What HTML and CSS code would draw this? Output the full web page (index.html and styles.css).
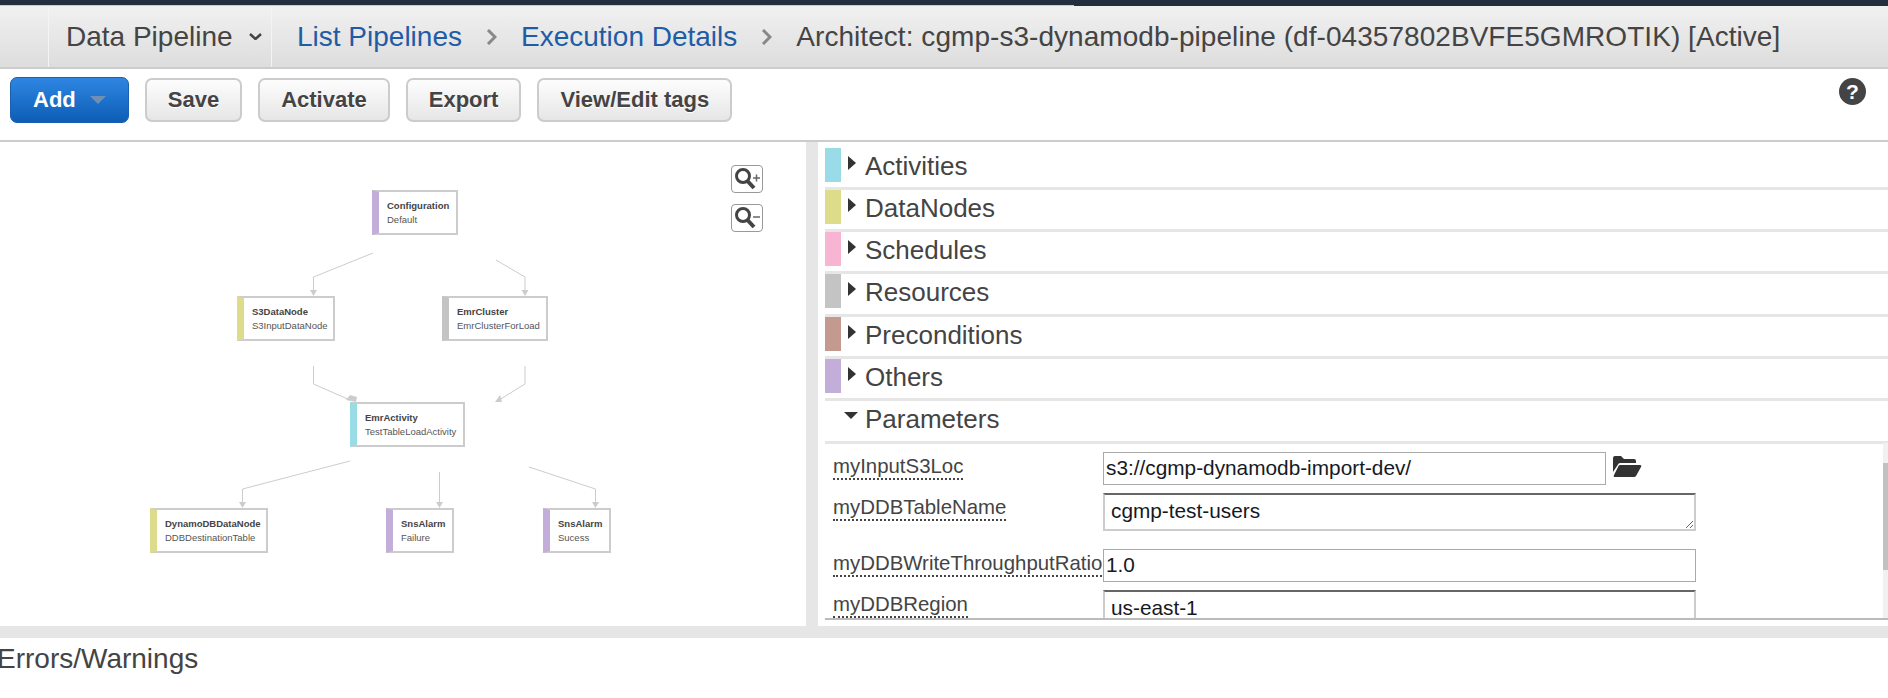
FILE: index.html
```html
<!DOCTYPE html>
<html lang="en">

<head>
    <meta charset="UTF-8">
    <title>Data Pipeline Architect</title>
    <link rel="stylesheet" href="styles.css">
</head>

<body>

    <div class="topbar"><div class="topbar-line"></div></div>

    <header class="header">
        <div class="header-tile"></div>
        <div class="service">
            <span>Data Pipeline</span>
            <svg class="service-caret" width="13" height="7" viewBox="0 0 13 7"><path d="M1 1 L6.5 6 L12 1" fill="none" stroke="#444" stroke-width="2.5"/></svg>
        </div>
        <nav class="crumbs">
            <a href="#">List Pipelines</a>
            <svg class="crumb-sep" width="11" height="16" viewBox="0 0 11 16"><path d="M2 1 L9 8 L2 15" fill="none" stroke="#888" stroke-width="3"/></svg>
            <a href="#">Execution Details</a>
            <svg class="crumb-sep" width="11" height="16" viewBox="0 0 11 16"><path d="M2 1 L9 8 L2 15" fill="none" stroke="#888" stroke-width="3"/></svg>
            <span class="crumb-current">Architect: cgmp-s3-dynamodb-pipeline (df-04357802BVFE5GMROTIK) [Active]</span>
        </nav>
    </header>

    <div class="toolbar">
        <button class="btn btn-primary">Add <span class="btn-caret"></span></button>
        <button class="btn">Save</button>
        <button class="btn">Activate</button>
        <button class="btn">Export</button>
        <button class="btn">View/Edit tags</button>
        <span class="help">?</span>
    </div>

    <main class="main">
        <section class="canvas">
            <svg class="edges" width="806" height="484" viewBox="0 0 806 484">
                <g fill="none" stroke="#ccc" stroke-width="1">
                    <path d="M373 111 L313.5 135 V150"/>
                    <path d="M496 118 L525 135 V150"/>
                    <path d="M313.5 224 V242 L350 258"/>
                    <path d="M525 224 V242 L499 258"/>
                    <path d="M350 319 L242.5 347 V362"/>
                    <path d="M439.5 330 V362"/>
                    <path d="M529 325 L595.5 347 V362"/>
                </g>
                <g fill="#ccc">
                    <polygon points="310,148 317,148 313.5,154"/>
                    <polygon points="521.5,148 528.5,148 525,154"/>
                    <polygon points="350,253 357,255 356,260 346,258"/>
                    <polygon points="495,260 502,260 500,253"/>
                    <polygon points="239,360 246,360 242.5,366"/>
                    <polygon points="436,360 443,360 439.5,366"/>
                    <polygon points="592,360 599,360 595.5,366"/>
                </g>
            </svg>

            <div class="node node-others node-config">
                <div class="node-title">Configuration</div>
                <div class="node-name">Default</div>
            </div>
            <div class="node node-data node-s3">
                <div class="node-title">S3DataNode</div>
                <div class="node-name">S3InputDataNode</div>
            </div>
            <div class="node node-resource node-emr">
                <div class="node-title">EmrCluster</div>
                <div class="node-name">EmrClusterForLoad</div>
            </div>
            <div class="node node-activity node-act">
                <div class="node-title">EmrActivity</div>
                <div class="node-name">TestTableLoadActivity</div>
            </div>
            <div class="node node-data node-ddb">
                <div class="node-title">DynamoDBDataNode</div>
                <div class="node-name">DDBDestinationTable</div>
            </div>
            <div class="node node-others node-fail">
                <div class="node-title">SnsAlarm</div>
                <div class="node-name">Failure</div>
            </div>
            <div class="node node-others node-ok">
                <div class="node-title">SnsAlarm</div>
                <div class="node-name">Sucess</div>
            </div>

            <button class="zoom-btn zoom-in">
                <svg width="30" height="26" viewBox="0 0 30 26">
                    <circle cx="11" cy="10" r="6.5" fill="none" stroke="#444" stroke-width="3"/>
                    <path d="M15.5 15 L22 22" stroke="#444" stroke-width="4"/>
                    <path d="M21 12 H28 M24.5 8.5 V15.5" stroke="#666" stroke-width="1.5"/>
                </svg>
            </button>
            <button class="zoom-btn zoom-out">
                <svg width="30" height="26" viewBox="0 0 30 26">
                    <circle cx="11" cy="10" r="6.5" fill="none" stroke="#444" stroke-width="3"/>
                    <path d="M15.5 15 L22 22" stroke="#444" stroke-width="4"/>
                    <path d="M21 12 H28" stroke="#666" stroke-width="1.5"/>
                </svg>
            </button>
        </section>

        <div class="splitter"></div>

        <section class="panel">
            <div class="group"><span class="swatch swatch-activity"></span><span class="arrow"></span><span class="group-name">Activities</span></div>
            <div class="group"><span class="swatch swatch-data"></span><span class="arrow"></span><span class="group-name">DataNodes</span></div>
            <div class="group"><span class="swatch swatch-schedule"></span><span class="arrow"></span><span class="group-name">Schedules</span></div>
            <div class="group"><span class="swatch swatch-resource"></span><span class="arrow"></span><span class="group-name">Resources</span></div>
            <div class="group"><span class="swatch swatch-precondition"></span><span class="arrow"></span><span class="group-name">Preconditions</span></div>
            <div class="group"><span class="swatch swatch-others"></span><span class="arrow"></span><span class="group-name">Others</span></div>
            <div class="group"><span class="arrow-open"></span><span class="group-name">Parameters</span></div>

            <div class="params">
                <div class="param">
                    <div class="param-label"><span>myInputS3Loc</span></div>
                    <input class="param-input param-input-short" type="text" value="s3://cgmp-dynamodb-import-dev/">
                    <svg class="folder" width="30" height="23" viewBox="0 0 30 23">
                        <path d="M1 17 V3 Q1 1 3 1 H9 L12 4 H22 Q24 4 24 6 V8 H8 Q6.5 8 6 9.5 Z" fill="#333"/>
                        <path d="M8 10 H28 Q30 10 29 12 L24 21 Q23.5 22 22 22 H3 Q1 22 2 20 L6.5 11 Q7 10 8 10 Z" fill="#333"/>
                    </svg>
                </div>
                <div class="param param-tall">
                    <div class="param-label"><span>myDDBTableName</span></div>
                    <textarea class="param-text">cgmp-test-users</textarea>
                </div>
                <div class="param">
                    <div class="param-label"><span>myDDBWriteThroughputRatio</span></div>
                    <input class="param-input" type="text" value="1.0">
                </div>
                <div class="param param-tall">
                    <div class="param-label"><span>myDDBRegion</span></div>
                    <textarea class="param-text">us-east-1</textarea>
                </div>
            </div>

            <div class="scrollbar"><div class="scrollbar-thumb"></div></div>
        </section>
    </main>

    <div class="errors">Errors/Warnings</div>

</body>

</html>
```

FILE: styles.css
```css
* {
    box-sizing: border-box;
}

html,
body {
    height: 100%;
}

body {
    margin: 0;
    overflow: hidden;
    background-color: #fff;
    color: #444;
    font-family: "Liberation Sans", Arial, sans-serif;
}

.topbar {
    height: 6px;
    background-color: #232f3e;
}

.topbar-line {
    width: 1074px;
    height: 1px;
    margin-top: 5px;
    background-color: #c8ccd0;
    float: left;
}

.header {
    display: flex;
    align-items: stretch;
    height: 63px;
    border-bottom: 2px solid #ccc;
    background-image: linear-gradient(#f1f1f1, #dddddd);
    font-size: 28px;
}

.header-tile {
    width: 49px;
    border-right: 1px solid #f4f4f4;
}

.service {
    display: flex;
    align-items: center;
    width: 223px;
    padding-left: 17px;
    border-right: 1px solid #f4f4f4;
}

.service-caret {
    margin-left: 16px;
}

.crumbs {
    display: flex;
    align-items: center;
    padding-left: 25px;
    white-space: nowrap;
}

.crumbs a {
    color: #1f5ca6;
    text-decoration: none;
}

.crumb-sep {
    margin: 0 24px;
}

.crumb-current {
    letter-spacing: 0.05px;
}

.toolbar {
    display: flex;
    align-items: center;
    gap: 16px;
    height: 71px;
    padding: 0 22px 9px 10px;
}

.btn {
    height: 44px;
    padding: 0 21px;
    border: 2px solid #ccc;
    border-radius: 7px;
    background-image: linear-gradient(#fdfdfd, #e6e6e6);
    color: #444;
    font-family: inherit;
    font-size: 22px;
    font-weight: bold;
    text-shadow: 0 1px 0 #fff;
}

.btn-primary {
    display: flex;
    align-items: center;
    gap: 14px;
    height: 46px;
    padding: 0 22px;
    border: 1px solid #1a5fb0;
    background-image: linear-gradient(#2e86e2, #0d5db5);
    color: #fff;
    text-shadow: none;
}

.btn-caret {
    width: 0;
    height: 0;
    border-top: 8px solid #6f8fb5;
    border-left: 8px solid transparent;
    border-right: 8px solid transparent;
}

.help {
    width: 27px;
    height: 27px;
    margin-left: auto;
    margin-bottom: 18px;
    border-radius: 50%;
    background-color: #444;
    color: #fff;
    font-size: 21px;
    font-weight: bold;
    line-height: 27px;
    text-align: center;
}

.main {
    display: flex;
    height: 486px;
    border-top: 2px solid #ccc;
}

.canvas {
    position: relative;
    width: 806px;
    flex-shrink: 0;
}

.edges {
    position: absolute;
    left: 0;
    top: 0;
}

.node {
    position: absolute;
    height: 45px;
    padding: 7px 0 0 8px;
    border: 2px solid #ccc;
    border-left-width: 7px;
    background-color: #fff;
    font-size: 9.5px;
    line-height: 14px;
    white-space: nowrap;
}

.node-title {
    font-weight: bold;
}

.node-name {
    color: #555;
}

.node-others {
    border-left-color: #c2aed8;
}

.node-data {
    border-left-color: #dcdc8a;
}

.node-resource {
    border-left-color: #c4c4c4;
}

.node-activity {
    border-left-color: #9adbe8;
}

.node-config {
    left: 372px;
    top: 48px;
    width: 86px;
}

.node-s3 {
    left: 237px;
    top: 154px;
    width: 98px;
}

.node-emr {
    left: 442px;
    top: 154px;
    width: 106px;
}

.node-act {
    left: 350px;
    top: 260px;
    width: 115px;
}

.node-ddb {
    left: 150px;
    top: 366px;
    width: 118px;
}

.node-fail {
    left: 386px;
    top: 366px;
    width: 68px;
}

.node-ok {
    left: 543px;
    top: 366px;
    width: 68px;
}

.zoom-btn {
    position: absolute;
    left: 731px;
    width: 32px;
    height: 28px;
    padding: 0;
    border: 1px solid #999;
    border-radius: 4px;
    background-color: #fff;
}

.zoom-in {
    top: 23px;
}

.zoom-out {
    top: 62px;
}

.splitter {
    width: 12px;
    flex-shrink: 0;
    background-color: #e6e6e6;
}

.panel {
    position: relative;
    flex: 1;
    height: 478px;
    margin-left: 7px;
    padding-top: 5.5px;
    overflow: hidden;
    border-bottom: 2px solid #bbb;
}

.group {
    display: flex;
    height: 42.33px;
    border-bottom: 3px solid #e6e6e6;
    font-size: 26px;
}

.swatch {
    width: 16px;
    height: 34px;
}

.swatch-activity {
    background-color: #9adbe8;
}

.swatch-data {
    background-color: #dcdc8a;
}

.swatch-schedule {
    background-color: #f7b5d3;
}

.swatch-resource {
    background-color: #c4c4c4;
}

.swatch-precondition {
    background-color: #c49a90;
}

.swatch-others {
    background-color: #c2aed8;
}

.arrow {
    width: 0;
    height: 0;
    margin: 8px 0 0 7px;
    border-top: 7px solid transparent;
    border-bottom: 7px solid transparent;
    border-left: 8px solid #333;
}

.arrow-open {
    width: 0;
    height: 0;
    margin: 11px 0 0 19px;
    border-left: 7px solid transparent;
    border-right: 7px solid transparent;
    border-top: 7px solid #333;
}

.group-name {
    margin-left: 9px;
    line-height: 36px;
}

.arrow-open + .group-name {
    margin-left: 7px;
}

.params {
    padding: 8px 0 0 8px;
}

.param {
    display: flex;
    align-items: flex-start;
    height: 33px;
    margin-bottom: 8px;
}

.param-tall {
    height: 38px;
    margin-bottom: 18px;
}

.param-label {
    width: 270px;
    flex-shrink: 0;
    padding-top: 2px;
    font-size: 20.4px;
    line-height: 24px;
    white-space: nowrap;
}

.param-label span {
    display: inline-block;
    border-bottom: 2px dotted #444;
}

.param-input {
    width: 593px;
    height: 33px;
    padding: 0 2px;
    border: 1px solid #a9a9a9;
    color: #16191f;
    font-family: inherit;
    font-size: 20.8px;
}

.param-input-short {
    width: 503px;
}

.param-text {
    width: 593px;
    height: 38px;
    padding: 4px 6px;
    border: 2px solid #ccc;
    border-top-color: #666;
    color: #16191f;
    font-family: inherit;
    font-size: 20.8px;
    overflow: hidden;
}

.folder {
    margin: 3px 0 0 6px;
}

.scrollbar {
    position: absolute;
    right: 0;
    top: 301px;
    bottom: 0;
    width: 5px;
    background-color: #f1f1f1;
}

.scrollbar-thumb {
    height: 107px;
    margin-top: 20px;
    background-color: #c1c1c1;
}

.errors {
    height: 60px;
    margin-left: -3px;
    border-top: 12px solid #e6e6e6;
    font-size: 28px;
    line-height: 42px;
}
```
